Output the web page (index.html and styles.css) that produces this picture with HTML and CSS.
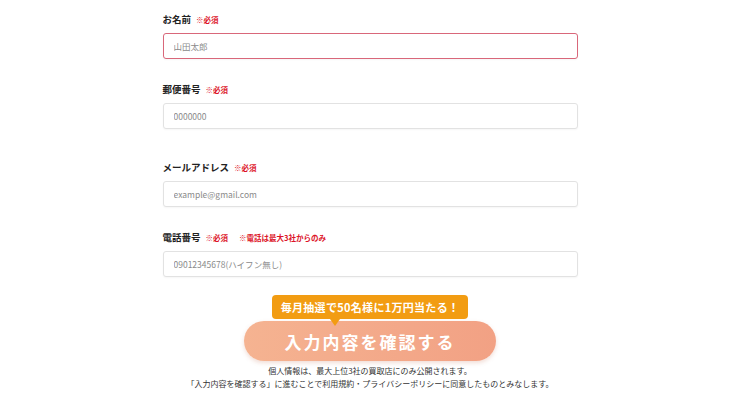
FILE: index.html
```html
<!DOCTYPE html>
<html lang="ja">
<head>
    <meta charset="utf-8">
    <title>お問い合わせフォーム</title>
    <link rel="stylesheet" href="styles.css">
</head>
<body>
    <form class="entry-form">
        <div class="field field-name">
            <label class="label">お名前<span class="req">※必須</span></label>
            <input type="text" class="input input-error" placeholder="山田太郎">
        </div>

        <div class="field field-zip">
            <label class="label">郵便番号<span class="req">※必須</span></label>
            <input type="text" class="input" placeholder="0000000">
        </div>

        <div class="field field-mail">
            <label class="label">メールアドレス<span class="req">※必須</span></label>
            <input type="text" class="input" placeholder="example@gmail.com">
        </div>

        <div class="field field-tel">
            <label class="label">電話番号<span class="req">※必須</span><span class="req req-note">※電話は最大3社からのみ</span></label>
            <input type="text" class="input" placeholder="09012345678(ハイフン無し)">
        </div>

        <div class="submit-area">
            <div class="badge">毎月抽選で50名様に1万円当たる！</div>
            <button type="button" class="submit-btn">入力内容を確認する</button>
            <p class="note">個人情報は、最大上位3社の買取店にのみ公開されます。<br>「入力内容を確認する」に進むことで利用規約・プライバシーポリシーに同意したものとみなします。</p>
        </div>
    </form>
</body>
</html>
```

FILE: styles.css
```css
body {
    margin: 0;
    background: #fff;
    font-family: "Noto Sans CJK JP", "Noto Sans", sans-serif;
    color: #222;
}
.entry-form {
    width: 415px;
    margin: 0 auto;
    padding-top: 12px;
}
.field {
    margin-bottom: 23px;
}
.field-zip {
    margin-bottom: 31px;
}
.label {
    display: flex;
    align-items: center;
    height: 14px;
    font-size: 9.5px;
    font-weight: bold;
    margin-bottom: 7px;
}
.req {
    color: #dc1428;
    font-size: 7.5px;
    margin-left: 5px;
}
.req-note {
    margin-left: 11px;
}
.input {
    display: block;
    box-sizing: border-box;
    width: 100%;
    height: 26px;
    padding: 0 10px;
    border: 1px solid #e2e2e2;
    border-radius: 3px;
    font-family: inherit;
    font-size: 8.5px;
    color: #333;
    background: #fff;
    box-shadow: 0 1px 2px rgba(0,0,0,0.04);
}
.input::placeholder {
    color: #8a8a8a;
}
.input-error {
    border-color: #d9677a;
}
.submit-area {
    display: flex;
    flex-direction: column;
    align-items: center;
    margin-top: -5px;
}
.badge {
    position: relative;
    z-index: 1;
    background: #f29c12;
    color: #fff;
    font-size: 11px;
    font-weight: bold;
    line-height: 24px;
    padding: 0 9px;
    border-radius: 4px;
    letter-spacing: 0.3px;
}
.badge::after {
    content: "";
    position: absolute;
    left: 58px;
    bottom: -7px;
    border-left: 5px solid transparent;
    border-right: 5px solid transparent;
    border-top: 7px solid #f29c12;
}
.submit-btn {
    width: 252px;
    height: 40px;
    margin-top: 2px;
    border: none;
    border-radius: 20px;
    background: linear-gradient(90deg, #f5b391, #f2a184);
    color: #fff;
    font-family: inherit;
    font-size: 17px;
    font-weight: bold;
    letter-spacing: 2px;
    box-shadow: 0 2px 4px rgba(200,120,90,0.25);
}
.note {
    margin: 3px 0 0;
    font-size: 8px;
    line-height: 13px;
    text-align: center;
    color: #333;
}
```
